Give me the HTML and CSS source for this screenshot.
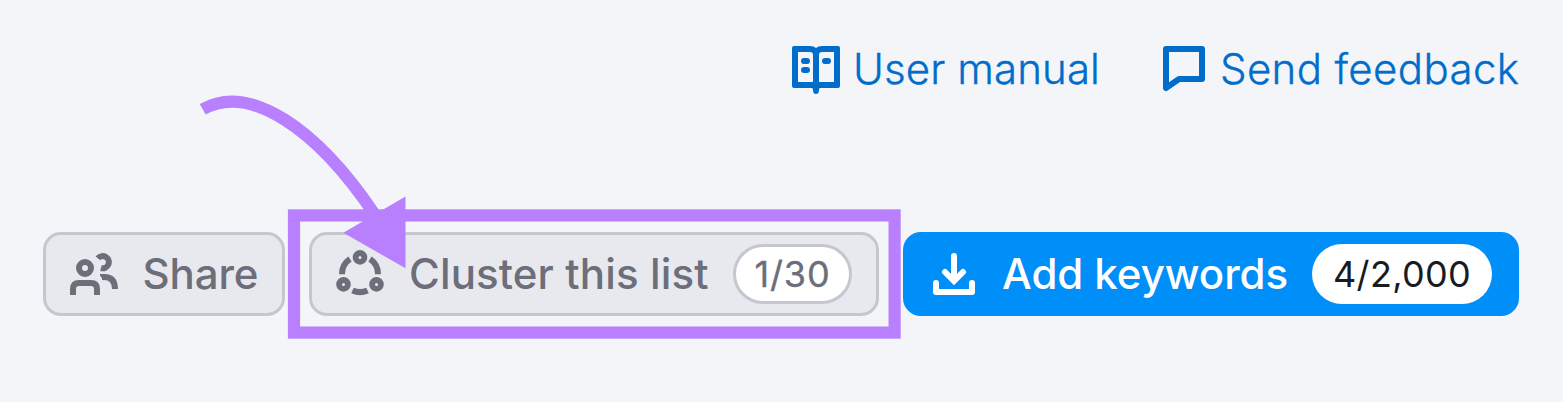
FILE: index.html
```html
<!DOCTYPE html>
<html lang="en">
<head>
<meta charset="utf-8">
<title>Keyword list</title>
<link rel="stylesheet" href="styles.css">
</head>
<body>
<main class="page">
  <nav class="links">
    <a class="link">
      <svg class="icon" viewBox="0 0 48 48"><path fill="currentColor" fill-rule="evenodd" d="M2 0H18Q22 0 24 2Q26 0 30 0H46Q48 0 48 2V40Q48 42 46 42H28Q27 42 27 44Q27 48 24 48Q21 48 21 44Q21 42 20 42H2Q0 42 0 40V2Q0 0 2 0ZM6 6V36H21V9Q21 6 18 6ZM30 6Q27 6 27 9V36H42V6Z"/><path class="stroke-round" d="M12 15h3M12 24h3M33 15h3"/></svg>
      <span class="manual-text">User manual</span>
    </a>
    <a class="link">
      <svg class="icon" viewBox="0 0 48 48"><path class="stroke-round" d="M6 3H42V33H19L6 42Z"/></svg>
      <span class="feedback-text">Send feedback</span>
    </a>
  </nav>
  <div class="actions">
    <button class="button share">
      <svg class="icon" viewBox="0 0 48 48"><circle class="stroke" cx="15" cy="18" r="6"/><path class="stroke" d="M3 45V39Q3 33 9 33H21Q27 33 27 39V45M28 8.3A6.1 6.1 0 1 1 31 18M32 27H34Q45 27 45 39"/><path fill="currentColor" d="M30 24H34V30.5Q31 27 30 25.5Z"/></svg>
      <span class="share-text">Share</span>
    </button>
    <button class="button cluster">
      <svg class="icon" viewBox="0 0 48 48"><path class="stroke" d="M6 24.3A18 18 0 0 1 14 9.1M34 9.1A18 18 0 0 1 42 24.3M31.5 40.4A18 18 0 0 1 16.5 40.4"/><g class="nodes"><circle cx="24" cy="7.4" r="4.4"/><circle cx="7.5" cy="34.4" r="4.4"/><circle cx="40.5" cy="34.4" r="4.4"/></g></svg>
      <span class="cluster-text">Cluster this list</span>
      <span class="badge badge-outline"><span class="count-text">1/30</span></span>
    </button>
    <button class="button add">
      <svg class="icon" viewBox="0 0 48 48"><path class="stroke-round" d="M6 33V42H42V33M24 6V28"/><path class="stroke" stroke-linecap="round" d="M15 22L24 31L33 22"/></svg>
      <span class="add-text">Add keywords</span>
      <span class="badge"><span class="limit-text">4/2,000</span></span>
    </button>
  </div>
  <svg class="annotation" viewBox="0 0 1563 402">
    <rect x="294" y="215.4" width="600.6" height="117.2"/>
    <path d="M202.7 109.3C249 83 316 127 375 215"/>
    <polygon points="405.5,196.5 343.3,232.7 405.5,268.3"/>
  </svg>
</main>
</body>
</html>
```
FILE: styles.css
```css
* { box-sizing: border-box; }
body { margin: 0; background: #f4f5f9; font-family: Inter, "Liberation Sans", sans-serif; }
.page { position: relative; width: 1563px; height: 402px; padding: 40px 44px 0 43px; overflow: hidden; }
.links { display: flex; justify-content: flex-end; gap: 60px; height: 60px; }
.link { display: flex; align-items: center; gap: 12px; color: #006dca; font-size: 42px; font-weight: 300; line-height: 60px; white-space: nowrap; -webkit-text-stroke: 0.35px #006dca; }
.icon { display: block; flex: none; width: 48px; height: 48px; overflow: visible; }
.stroke, .stroke-round { fill: none; stroke: currentColor; stroke-width: 6; }
.stroke-round { stroke-linecap: round; stroke-linejoin: round; }
.nodes { fill: none; stroke: currentColor; stroke-width: 5.8; }
.link span { flex: none; padding-bottom: 2px; }
.link .manual-text { width: 248px; padding-left: 1px; letter-spacing: 0.1px; }
.feedback-text { width: 299px; letter-spacing: 0.37px; }
.actions { display: flex; margin-top: 132px; }
.button { display: flex; align-items: center; flex: none; height: 84px; padding: 0 24px; border: 3px solid #c4c7cf; border-radius: 18px; background: #e8e9ee; color: #6c6e79; font: 500 42px/60px Inter, "Liberation Sans", sans-serif; white-space: nowrap; text-align: left; }
.share { width: 242px; gap: 24px; }
.cluster { width: 570px; margin-left: 24px; gap: 24px; }
.add { width: 616px; margin-left: 24px; gap: 24px; border-color: #008ff8; background: #008ff8; color: #fff; }
.share-text { padding-left: 0.5px; letter-spacing: -0.1px; }
.cluster-text { width: 301px; padding-left: 1px; letter-spacing: 0.13px; }
.add-text { width: 286px; letter-spacing: -0.05px; }
.badge { display: flex; align-items: center; justify-content: center; flex: none; height: 60px; width: 180px; border-radius: 30px; background: #fff; color: #191b23; font-size: 36px; font-weight: 400; letter-spacing: 0.3px; }
.badge-outline { width: 119px; border: 3px solid #c4c7cf; color: #6c6e79; letter-spacing: 0.9px; -webkit-text-stroke: 0.35px #6c6e79; }
.annotation { position: absolute; inset: 0; width: 1563px; height: 402px; fill: none; stroke: #b880ff; stroke-width: 12.2; pointer-events: none; }
.annotation polygon { fill: #b880ff; stroke: none; }
```
